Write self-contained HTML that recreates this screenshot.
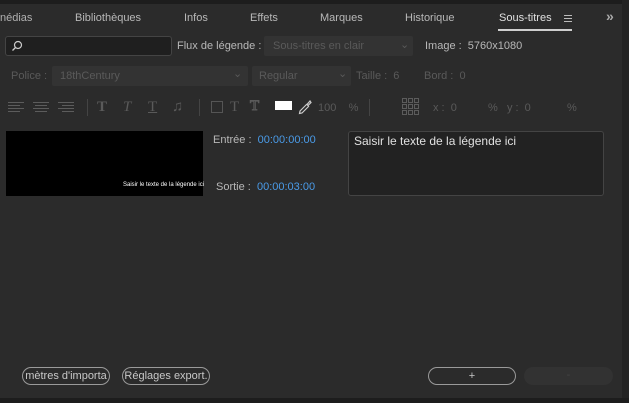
<!DOCTYPE html>
<html><head><meta charset="utf-8"><style>
*{margin:0;padding:0;box-sizing:border-box}
body{width:629px;height:403px;background:#2b2b2b;position:relative;overflow:hidden;font-family:"Liberation Sans",sans-serif;font-size:11px;color:#b8b8b8}
.a{position:absolute;white-space:nowrap}
.dim{color:#5a5a5a}
.box{position:absolute;background:#333;border-radius:2px}
.sep{position:absolute;width:1px;background:#444}
.btn{position:absolute;border:1px solid #9a9a9a;border-radius:9px;height:18px;color:#c8c8c8;font-size:11px;text-align:center;line-height:16px;overflow:hidden}
</style></head><body>
<div class="a" style="left:0;top:0;width:629px;height:4px;background:#1d1d1d"></div>
<div class="a" style="left:622px;top:0;width:7px;height:403px;background:#232323"></div>
<div class="a" style="left:0;top:398px;width:629px;height:5px;background:#1d1d1d"></div>
<div class="a" style="left:0;top:12px;color:#b0b0b0">nédias</div>
<div class="a" style="left:75px;top:12px">Bibliothèques</div>
<div class="a" style="left:184px;top:12px">Infos</div>
<div class="a" style="left:250px;top:12px">Effets</div>
<div class="a" style="left:320px;top:12px">Marques</div>
<div class="a" style="left:405px;top:12px">Historique</div>
<div class="a" style="left:499px;top:12px;color:#e0e0e0">Sous-titres</div>
<div class="a" style="left:498px;top:29px;width:74px;height:2px;background:#cfcfcf"></div>
<div class="a" style="left:564px;top:15px;width:8px;height:1px;background:#bbb;box-shadow:0 3px 0 #bbb,0 6px 0 #bbb"></div>
<div class="a" style="left:606px;top:8px;color:#aaa;font-weight:bold;font-size:14px">»</div>
<div class="a" style="left:5px;top:36px;width:167px;height:20px;background:#1f1f1f;border:1px solid #444;border-radius:3px"></div>
<svg class="a" style="left:11px;top:40px" width="12" height="12"><circle cx="7" cy="5" r="3.5" fill="none" stroke="#ccc" stroke-width="1.2"/><line x1="4.5" y1="7.5" x2="1.5" y2="10.5" stroke="#ccc" stroke-width="1.3"/></svg>
<div class="a" style="left:177px;top:40px">Flux de légende :</div>
<div class="box" style="left:264px;top:36px;width:149px;height:20px"></div>
<div class="a dim" style="left:273px;top:40px">Sous-titres en clair</div>
<div class="a dim" style="left:400px;top:38px">⌄</div>
<div class="a" style="left:425px;top:40px">Image :&nbsp; 5760x1080</div>
<div class="a dim" style="left:11px;top:70px">Police :</div>
<div class="box" style="left:52px;top:66px;width:196px;height:20px"></div>
<div class="a dim" style="left:60px;top:70px">18thCentury</div>
<div class="a dim" style="left:233px;top:67px">⌄</div>
<div class="box" style="left:252px;top:66px;width:99px;height:20px"></div>
<div class="a dim" style="left:259px;top:70px">Regular</div>
<div class="a dim" style="left:338px;top:67px">⌄</div>
<div class="a dim" style="left:356px;top:70px">Taille :&nbsp; 6</div>
<div class="a dim" style="left:424px;top:70px">Bord :&nbsp; 0</div>
<svg class="a" style="left:8px;top:101px" width="70" height="14" stroke="#5c5c5c"><g><line x1="0" y1="1.5" x2="16" y2="1.5"/><line x1="0" y1="4.5" x2="12" y2="4.5"/><line x1="0" y1="7.5" x2="16" y2="7.5"/><line x1="0" y1="10.5" x2="12" y2="10.5"/></g><g transform="translate(25,0)"><line x1="0" y1="1.5" x2="16" y2="1.5"/><line x1="2" y1="4.5" x2="14" y2="4.5"/><line x1="0" y1="7.5" x2="16" y2="7.5"/><line x1="2" y1="10.5" x2="14" y2="10.5"/></g><g transform="translate(50,0)"><line x1="0" y1="1.5" x2="16" y2="1.5"/><line x1="4" y1="4.5" x2="16" y2="4.5"/><line x1="0" y1="7.5" x2="16" y2="7.5"/><line x1="4" y1="10.5" x2="16" y2="10.5"/></g></svg>
<div class="sep" style="left:87px;top:99px;height:17px"></div>
<div class="a dim" style="left:97px;top:99px;font-family:'Liberation Serif';font-weight:bold;font-size:15px">T</div>
<div class="a dim" style="left:123px;top:99px;font-family:'Liberation Serif';font-style:italic;font-size:15px">T</div>
<div class="a dim" style="left:148px;top:99px;font-family:'Liberation Serif';font-size:15px;text-decoration:underline">T</div>
<div class="a dim" style="left:172px;top:98px;font-size:15px">♫</div>
<div class="sep" style="left:199px;top:99px;height:17px"></div>
<div class="a" style="left:211px;top:101px;width:12px;height:12px;border:1px solid #555"></div>
<div class="a dim" style="left:230px;top:99px;font-family:'Liberation Serif';font-size:15px">T</div>
<div class="a dim" style="left:250px;top:98px;font-family:'Liberation Serif';font-size:15px;-webkit-text-stroke:1px #5a5a5a;color:#2b2b2b">T</div>
<div class="a" style="left:275px;top:101px;width:17px;height:9px;background:#fff"></div>
<svg class="a" style="left:298px;top:100px" width="14" height="15"><path d="M12 1 L13 2.5 L10 5.5 L9 4.5 Z M9 4 L2 11 L1.5 13.5 L4 13 L11 6" fill="none" stroke="#ccc" stroke-width="1.2"/></svg>
<div class="a dim" style="left:318px;top:102px">100&nbsp;&nbsp;&nbsp; %</div>
<div class="sep" style="left:369px;top:99px;height:17px"></div>
<svg class="a" style="left:402px;top:98px" width="18" height="18" stroke="#5c5c5c" fill="none"><g><rect x="0.5" y="0.5" width="4" height="4"/><rect x="6.5" y="0.5" width="4" height="4"/><rect x="12.5" y="0.5" width="4" height="4"/><rect x="0.5" y="6.5" width="4" height="4"/><rect x="6.5" y="6.5" width="4" height="4"/><rect x="12.5" y="6.5" width="4" height="4"/><rect x="0.5" y="12.5" width="4" height="4"/><rect x="6.5" y="12.5" width="4" height="4"/><rect x="12.5" y="12.5" width="4" height="4"/></g></svg>
<div class="a dim" style="left:433px;top:102px">x :&nbsp; 0</div>
<div class="a dim" style="left:488px;top:102px">%&nbsp;&nbsp; y :&nbsp; 0</div>
<div class="a dim" style="left:567px;top:102px">%</div>
<div class="a" style="left:6px;top:131px;width:197px;height:65px;background:#000"></div>
<div class="a" style="left:123px;top:182px;font-size:6px;color:#fff">Saisir le texte de la légende ici</div>
<div class="a" style="left:213px;top:134px">Entrée :&nbsp; <span style="color:#4a9be8">00:00:00:00</span></div>
<div class="a" style="left:216px;top:181px">Sortie :&nbsp; <span style="color:#4a9be8">00:00:03:00</span></div>
<div class="a" style="left:348px;top:131px;width:256px;height:65px;background:#222;border:1px solid #444;border-radius:3px"></div>
<div class="a" style="left:354px;top:134px;color:#e0e0e0;font-size:12px">Saisir le texte de la légende ici</div>
<div class="btn" style="left:22px;top:367px;width:88px">mètres d'importa</div>
<div class="btn" style="left:122px;top:367px;width:88px">Réglages export.</div>
<div class="btn" style="left:428px;top:367px;width:88px">+</div>
<div class="a" style="left:524px;top:367px;width:89px;height:18px;border-radius:9px;background:#323232;color:#444;text-align:center;line-height:16px">-</div>
</body></html>
